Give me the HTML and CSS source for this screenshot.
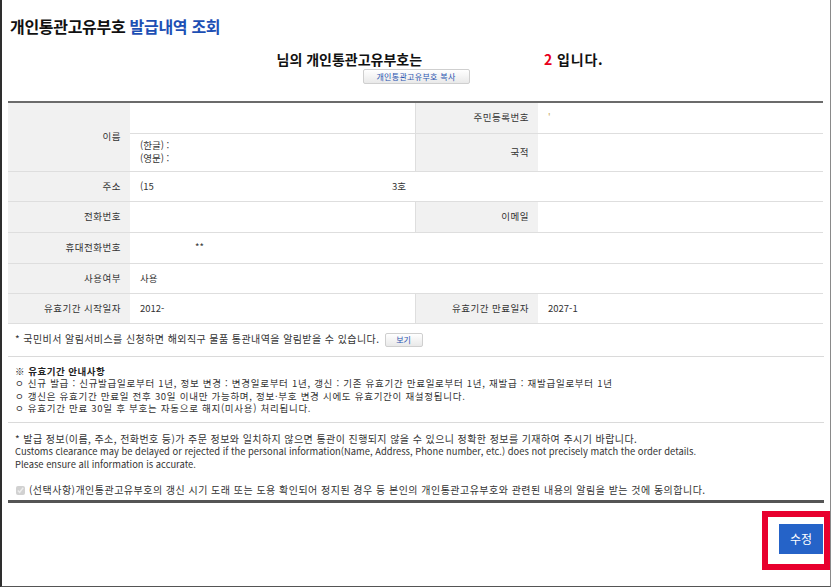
FILE: index.html
```html
<!DOCTYPE html>
<html lang="ko">
<head>
<meta charset="utf-8">
<title>개인통관고유부호 발급내역 조회</title>
<link rel="stylesheet" href="styles.css">
</head>
<body>
<div class="window">
  <h1 class="title">개인통관고유부호 <span class="title-blue">발급내역 조회</span></h1>
  <div class="result">
    <p class="headline"><span class="mask-name"></span>님의 개인통관고유부호는 <span class="mask-code"></span><span class="red">2</span><span class="tail"> 입니다.</span></p>
    <button class="btn-gray btn-copy" type="button">개인통관고유부호 복사</button>
  </div>
  <table class="info">
    <colgroup>
      <col class="c-th"><col class="c-td"><col class="c-th2"><col class="c-td">
    </colgroup>
    <tr class="r1">
      <th rowspan="2">이름</th>
      <td></td>
      <th>주민등록번호</th>
      <td><span class="dot">'</span></td>
    </tr>
    <tr class="r2">
      <td class="names">(한글) :<br>(영문) :</td>
      <th>국적</th>
      <td></td>
    </tr>
    <tr class="r3">
      <th>주소</th>
      <td colspan="3"><span class="addr-a">(15</span><span class="addr-b">3호</span></td>
    </tr>
    <tr class="r4">
      <th>전화번호</th>
      <td></td>
      <th>이메일</th>
      <td></td>
    </tr>
    <tr class="r5">
      <th>휴대전화번호</th>
      <td colspan="3"><span class="stars">**</span></td>
    </tr>
    <tr class="r6">
      <th>사용여부</th>
      <td colspan="3">사용</td>
    </tr>
    <tr class="r7">
      <th>유효기간 시작일자</th>
      <td>2012-</td>
      <th>유효기간 만료일자</th>
      <td>2027-1</td>
    </tr>
  </table>

  <div class="section s-alarm">
    <p>* 국민비서 알림서비스를 신청하면 해외직구 물품 통관내역을 알림받을 수 있습니다. <button class="btn-gray btn-view" type="button">보기</button></p>
  </div>

  <div class="section s-guide">
    <p class="guide-title">※ 유효기간 안내사항</p>
    <p>ㅇ 신규 발급 : 신규발급일로부터 1년, 정보 변경 : 변경일로부터 1년, 갱신 : 기존 유효기간 만료일로부터 1년, 재발급 : 재발급일로부터 1년</p>
    <p>ㅇ 갱신은 유효기간 만료일 전후 30일 이내만 가능하며, 정보·부호 변경 시에도 유효기간이 재설정됩니다.</p>
    <p>ㅇ 유효기간 만료 30일 후 부호는 자동으로 해지(미사용) 처리됩니다.</p>
  </div>

  <div class="section s-warn">
    <p class="ko">* 발급 정보(이름, 주소, 전화번호 등)가 주문 정보와 일치하지 않으면 통관이 진행되지 않을 수 있으니 정확한 정보를 기재하여 주시기 바랍니다.</p>
    <p class="en">Customs clearance may be delayed or rejected if the personal information(Name, Address, Phone number, etc.) does not precisely match the order details.</p>
    <p class="en">Please ensure all information is accurate.</p>
    <label class="agree"><input type="checkbox" checked disabled>(선택사항)개인통관고유부호의 갱신 시기 도래 또는 도용 확인되어 정지된 경우 등 본인의 개인통관고유부호와 관련된 내용의 알림을 받는 것에 동의합니다.</label>
  </div>

  <div class="footer">
    <button class="btn-edit" type="button">수정</button>
  </div>
  <div class="highlight"></div>
</div>
</body>
</html>
```

FILE: styles.css
```css
* { box-sizing: border-box; }
html, body { margin: 0; padding: 0; background: #fff; }
body {
  font-family: "Noto Sans CJK KR", "Noto Sans", sans-serif;
  color: #333;
  width: 835px;
  height: 588px;
  overflow: hidden;
}
.window {
  position: relative;
  width: 831px;
  height: 587px;
  border-left: 2px solid #2e2e2e;
  border-right: 1px solid #8a8a8a;
  border-bottom: 1px solid #555;
  padding: 0 6px 0 6px;
}
.title {
  margin: 0;
  padding: 15px 0 0 2px;
  height: 38px;
  font-size: 16px;
  line-height: 22px;
  font-weight: bold;
  color: #111;
  letter-spacing: -0.3px;
}
.title-blue { color: #1d4fb4; }
.result {
  display: flex;
  flex-direction: column;
  align-items: center;
  height: 63px;
}
.headline {
  margin: 12px 0 0 0;
  font-size: 14px;
  line-height: 19px;
  font-weight: bold;
  color: #111;
}
.mask-name { display: inline-block; width: 48px; }
.mask-code { display: inline-block; width: 118px; }
.red { color: #e8001c; }
.tail { letter-spacing: 0.8px; }
.btn-gray {
  font-family: "Noto Sans CJK KR", sans-serif;
  font-size: 8px;
  line-height: 12px;
  color: #2a54b0;
  background: linear-gradient(#ffffff, #e9e9e9);
  border: 1px solid #cfcfcf;
  border-radius: 2px;
  padding: 0;
  margin: 0;
}
.btn-copy {
  margin-top: 0;
  width: 107px;
  height: 15px;
  letter-spacing: 0.3px;
}
table.info {
  width: 815px;
  border-collapse: collapse;
  table-layout: fixed;
  border-top: 2px solid #6b6b6b;
  font-size: 9.5px;
}
.c-th { width: 122px; }
.c-th2 { width: 123px; }
.c-td { width: 285px; }
table.info th, table.info td {
  border-bottom: 1px solid #dedede;
  padding: 0;
  font-weight: normal;
  line-height: 13px;
}
table.info th {
  background: #f1f1f1;
  text-align: right;
  padding-right: 9px;
  color: #333;
  letter-spacing: 0.5px;
  border-left: 1px solid #dedede;
}
table.info tr > th:first-child { border-left: none; }
table.info td {
  padding-left: 10px;
  color: #333;
  background: #fff;
}
.r1 { height: 31px; }
.r2 { height: 38px; }
.r3 { height: 30px; }
.r4 { height: 31px; }
.r5 { height: 31px; }
.r6 { height: 30px; }
.r7 { height: 30px; }
td.names { padding-top: 2px; }
.dot { color: #c9a85a; }
.addr-a { display: inline-block; width: 252px; }
.stars { display: inline-block; padding-left: 55px; }
.section {
  border-bottom: 1px solid #dadada;
  font-size: 10px;
  color: #333;
}
.section p { margin: 0; }
.s-alarm { padding: 8px 0 9px 7px; height: 33px; }
.s-alarm p { line-height: 14px; letter-spacing: 0.42px; }
.btn-view {
  width: 38px;
  height: 14px;
  vertical-align: middle;
  margin-left: 2px;
  font-size: 8px;
  letter-spacing: 0;
}
.s-guide {
  padding: 8px 0 0 7px;
  height: 66px;
  font-size: 9.5px;
  line-height: 12.6px;
  letter-spacing: 0.72px;
}
.guide-title { font-weight: bold; color: #222; letter-spacing: 0.5px; }
.s-warn {
  padding: 10px 0 0 7px;
  height: 80px;
  border-bottom: 3px solid #555;
  line-height: 12.6px;
}
.s-warn .ko { letter-spacing: 0.42px; }
.s-warn .en { font-size: 9.4px; letter-spacing: 0; }
.agree {
  display: flex;
  align-items: center;
  margin-top: 14px;
  letter-spacing: 0.48px;
}
.agree input {
  width: 9px;
  height: 9px;
  margin: 0 4px 0 1px;
}
.footer {
  display: flex;
  justify-content: flex-end;
  padding: 21px 1px 0 0;
}
.btn-edit {
  width: 44px;
  height: 30px;
  background: #2563c8;
  color: #fff;
  border: none;
  font-family: "Noto Sans CJK KR", sans-serif;
  font-size: 12px;
  padding: 0;
}
.highlight {
  position: absolute;
  left: 760px;
  top: 511px;
  width: 68px;
  height: 59px;
  border: 6px solid #e8002e;
  pointer-events: none;
}
```
